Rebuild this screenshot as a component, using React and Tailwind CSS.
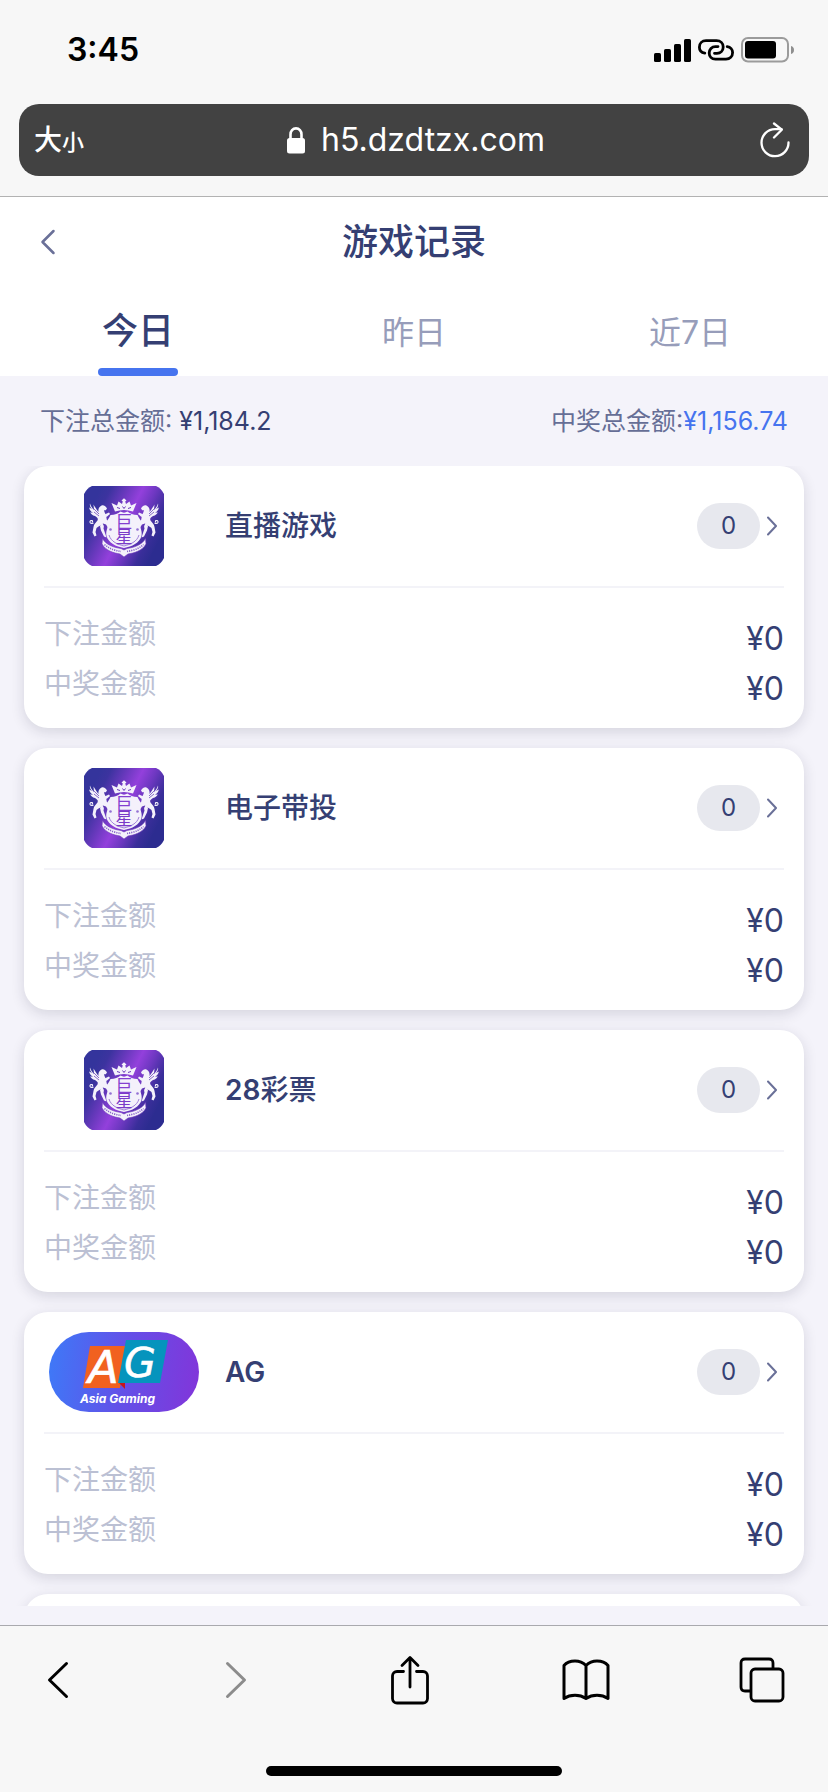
const games = [
  { name: '直播游戏', logo: 'star' },
  { name: '电子带投', logo: 'star' },
  { prefix: '28', name: '彩票', logo: 'star' },
  { prefix: 'AG', name: '', logo: 'ag' },
];

function Signal() {
  return (
    <svg width="37" height="23" viewBox="0 0 37 23" aria-hidden="true">
      <rect x="0" y="14" width="7" height="9" rx="1.6" />
      <rect x="10" y="10" width="7" height="13" rx="1.6" />
      <rect x="20" y="5" width="7" height="18" rx="1.6" />
      <rect x="30" y="0" width="7" height="23" rx="1.6" />
    </svg>
  );
}

function Hotspot() {
  return (
    <svg width="36" height="22" viewBox="0 0 36 22" fill="none" stroke="#000" strokeWidth="2.8" strokeLinecap="round" aria-hidden="true">
      <path d="M6.8 14.1C3.5 13.6 1.4 11.3 1.4 8.2C1.4 4.4 4.2 1.7 8 1.7H18.5C22.6 1.7 25.2 4.6 25.2 8C25.2 11.6 22.5 14.3 19 14.3H16.5" />
      <path d="M29.2 7.6C32.5 8 34.6 10.5 34.6 13.6C34.6 17.4 31.8 20.1 28 20.1H17.5C13.4 20.1 11.2 17.4 11.2 14C11.2 10.4 13.8 7.6 17.4 7.6H20" />
    </svg>
  );
}

function Battery() {
  return (
    <svg width="53" height="26" viewBox="0 0 53 26" aria-hidden="true">
      <rect x="1" y="1" width="46" height="23.5" rx="6" fill="none" stroke="#9b9b9b" strokeWidth="2" />
      <rect x="4" y="4" width="31" height="17.5" rx="3" />
      <path d="M50 9C52 9.6 53 11 53 13C53 15 52 16.4 50 17Z" fill="#8f8f8f" />
    </svg>
  );
}

function Lock() {
  return (
    <svg width="18" height="27" viewBox="0 0 18 27" aria-hidden="true">
      <rect x="0" y="11" width="18" height="15.5" rx="2.5" fill="#fff" />
      <path d="M3.5 12V7.5C3.5 4 5.8 1.4 9 1.4S14.5 4 14.5 7.5V12" fill="none" stroke="#fff" strokeWidth="2.6" />
    </svg>
  );
}

function Reload() {
  return (
    <svg width="30" height="36" viewBox="0 0 30 36" fill="none" stroke="#fff" strokeWidth="2.3" strokeLinecap="round" strokeLinejoin="round" aria-hidden="true">
      <path d="M28.500 20.500A13.500 13.500 0 1 1 15 7.200H21.500" />
      <path d="M14 1.500L21.800 7.700L14 15.500" />
    </svg>
  );
}

function Griffin() {
  return (
    <g fill="#f4f1fb">
      <path d="M6 17.500C7 21 8.500 22 10 24L9.500 18.500C11.500 22 13 24 14.500 26C14 23 15 20.500 18 19.200C20.500 19 22 20.500 23 22.500L21.800 24.300L20 24.200C20.500 27 22.500 28.500 22.500 32C22.500 34 24 35.200 24.500 37.500L26 41.500L24.500 42.500L22 38.500L19 37.500C17.500 39.500 14.500 40 12.500 42L11.500 46L12.500 49.500L10.500 50.500L8.500 46.500L9.500 41C9.800 38 12 36.500 13.500 34.500C14.500 32 13 31.500 11 30C8.500 29.500 6.800 28 6.300 26.300L9 27C7 25.500 5.300 23.700 5.200 21.500L8 23C6.300 21 5.500 19.500 6 17.500Z" />
      <path d="M18 37C19.500 38.500 20.500 40 19.500 42.500L21 47L22.500 51.500L20 50.500L17 44.500L16 40Z" />
      <path d="M9.500 37C6 38.500 5 35.500 7 34.500C9 34 9 36.500 7.500 36" fill="none" stroke="#f4f1fb" strokeWidth="1.1" />
      <path d="M20.500 28.500L25 26.500L26 28L22.500 31Z" />
      <path d="M10 26L15 30M9.500 22.500L15 28" stroke="#5a34b0" strokeWidth=".7" />
    </g>
  );
}

function StarLogo() {
  return (
    <svg className="size-20" viewBox="0 0 80 80" role="img" aria-label="巨星">
      <defs>
        <linearGradient id="starSheen" gradientUnits="userSpaceOnUse" x1="6" y1="23" x2="74" y2="57">
          <stop offset="0" stopColor="#34349c" />
          <stop offset=".12" stopColor="#3c339f" />
          <stop offset=".32" stopColor="#6a39be" />
          <stop offset=".5" stopColor="#9340dc" />
          <stop offset=".66" stopColor="#6f38c2" />
          <stop offset=".86" stopColor="#3a2e9a" />
          <stop offset="1" stopColor="#2c2c90" />
        </linearGradient>
      </defs>
      <path d="M8 0H72Q77 2 80 8V72Q77 78 72 80H8Q3 78 0 72V8Q3 2 8 0Z" fill="url(#starSheen)" />
      <Griffin />
      <g transform="matrix(-1 0 0 1 80 0)"><Griffin /></g>
      <path d="M27.500 17L33 19.500L34.500 15.500L38 18L38.800 15.500L37.500 14.500L40 12.200L42.500 14.500L41.200 15.500L42 18L45.500 15.500L47 19.500L52.500 17L49 25.500C43 23.500 37 23.500 31 25.500Z" fill="#f4f1fb" />
      <path d="M33 21.500L36 22.500M38.500 20.500L40 22.500L41.500 20.500M44 22.500L47 21.500" stroke="#6838ba" strokeWidth="1" fill="none" />
      <path d="M26.500 29C31 29 34 27.500 36.500 25.500C39 27 41 27 43.500 25.500C46 27.500 49 29 53.500 29C54.500 32 57 34 57.500 36L56 38C56 42 58.500 45 57.500 50C55.500 57 48 60.500 40 62C32 60.500 24.500 57 22.500 50C21.500 45 24 42 24 38L22.500 36C23 34 25.500 32 26.500 29Z" fill="#f4f1fb" />
      <path d="M25 49C27 56 34 58.500 40 60C46 58.500 53 56 55 49" fill="none" stroke="#8a63cf" strokeWidth=".8" />
      <circle cx="26.500" cy="43.500" r="1.3" fill="#9270d3" />
      <circle cx="53.500" cy="43.500" r="1.3" fill="#9270d3" />
      <text x="40" y="42" textAnchor="middle" fontSize="17" fill="#8440d0" className="font-['Noto_Sans_CJK_SC',sans-serif]">巨</text>
      <text x="40" y="57" textAnchor="middle" fontSize="17" fill="#7a3ac8" className="font-['Noto_Sans_CJK_SC',sans-serif]">星</text>
      <path d="M18.500 52.500C22 59 30 61.500 37 62.500L40 64L43 62.500C50 61.500 58 59 61.500 52.500L62 58C58 65 50 67 44 68L40 71L36 68C30 67 22 65 18 58Z" fill="#f4f1fb" stroke="#6936b8" strokeWidth=".6" />
      <path d="M20.500 58.500C26 63.500 32 64.500 37 65.500M43 65.500C48 64.500 54 63.500 59.500 58.500" fill="none" stroke="#8966c9" strokeWidth="1.6" strokeDasharray="1.2 1" />
    </svg>
  );
}

function AgLogo() {
  return (
    <svg className="h-20 w-[150px]" viewBox="0 0 150 80" role="img" aria-label="Asia Gaming">
      <defs>
        <linearGradient id="agBg" gradientUnits="userSpaceOnUse" x1="0" y1="32" x2="150" y2="48">
          <stop offset="0" stopColor="#3f78f7" />
          <stop offset=".5" stopColor="#6350e8" />
          <stop offset="1" stopColor="#8136da" />
        </linearGradient>
      </defs>
      <rect width="150" height="80" rx="40" fill="url(#agBg)" />
      <path d="M41 14H77L71 56H34Z" fill="#f1611f" />
      <path d="M70 51H76V57Z" fill="#c5161c" />
      <text x="39" y="51" fontSize="45" fontStyle="italic" fill="#fff" stroke="#fff" strokeWidth=".6" className="font-['DejaVu_Sans',sans-serif]">A</text>
      <path d="M77 8H119L111 51H69Z" fill="#0594bd" />
      <text x="75" y="45" fontSize="41" fontStyle="italic" fill="#fff" stroke="#fff" strokeWidth=".6" className="font-['DejaVu_Sans',sans-serif]">G</text>
      <text x="31" y="71" fontSize="12" fontWeight="700" fontStyle="italic" fill="#fff" className="font-[Inter,sans-serif]">Asia Gaming</text>
    </svg>
  );
}

function GameCard({ game }) {
  return (
    <li className="rounded-3xl bg-white px-5 shadow-[0_4px_14px_rgba(30,30,60,0.14)]">
      <a href="#detail" className="flex h-[122px] items-center border-b-2 border-[#f3f3f8]">
        <span className="ml-[5px] flex w-[150px] justify-center">
          {game.logo === 'ag' ? <AgLogo /> : <StarLogo />}
        </span>
        <span className="ml-[26px] flex-1 text-[28px] leading-10 font-medium">
          <span className="font-semibold">{game.prefix}</span>{game.name}
        </span>
        <span className="flex h-[46px] w-[63px] items-center justify-center rounded-full bg-[#e7e8ee] text-2xl">0</span>
        <svg className="mr-[7px] ml-[7px]" width="10" height="20" viewBox="0 0 10 20" fill="none" stroke="#6a7098" strokeWidth="2" strokeLinecap="round" strokeLinejoin="round" aria-hidden="true">
          <path d="M1 1.500L9 10L1 18.500" />
        </svg>
      </a>
      <dl className="pt-[26px] pb-[14px]">
        {['下注金额', '中奖金额'].map((label) => (
          <div key={label} className="flex h-[50px] justify-between">
            <dt className="text-[28px] leading-10 text-[#bbc0d3]">{label}</dt>
            <dd className="text-[32px] leading-[50px]">¥0</dd>
          </div>
        ))}
      </dl>
    </li>
  );
}

export default function App() {
  return (
    <div className="flex h-screen flex-col bg-[#f4f3fa] font-[Inter,'Noto_Sans_CJK_SC',sans-serif] text-[#353f73]">
      <div className="border-b border-[#b2b2b2] bg-[#f7f7f7] pb-5 text-black">
        <div className="flex h-[104px] items-center justify-between pr-[34px] pb-1 pl-[67px]">
          <time className="text-[32px] leading-10 font-semibold">3:45</time>
          <div className="flex items-center gap-[7px]">
            <Signal />
            <Hotspot />
            <Battery />
          </div>
        </div>
        <div className="mx-[19px] grid h-[72px] grid-cols-[1fr_auto_1fr] items-center rounded-[20px] bg-[#424242] px-[15px] text-white">
          <button type="button" className="justify-self-start pt-1 leading-10 font-medium">
            <span className="text-[28px]">大</span>
            <span className="text-[22px]">小</span>
          </button>
          <div className="flex items-center gap-4 pl-1">
            <Lock />
            <span className="text-[32px] leading-10">h5.dzdtzx.com</span>
          </div>
          <button type="button" aria-label="刷新" className="mr-1 justify-self-end"><Reload /></button>
        </div>
      </div>

      <header className="bg-white">
        <div className="grid h-[90px] grid-cols-[1fr_auto_1fr] items-center px-10">
          <button type="button" aria-label="返回" className="justify-self-start">
            <svg width="16" height="26" viewBox="0 0 16 26" fill="none" stroke="#6a7098" strokeWidth="2.5" strokeLinecap="round" strokeLinejoin="round" aria-hidden="true">
              <path d="M13.500 2L2.500 13L13.500 24" />
            </svg>
          </button>
          <h1 className="text-4xl font-medium">游戏记录</h1>
        </div>
        <nav className="grid h-[89px] grid-cols-3 text-[32px] text-[#979dba]">
          <button type="button" className="flex flex-col items-center justify-between pt-4 text-4xl font-medium text-[#353f73]">
            <span className="leading-[56px]">今日</span>
            <span className="h-2 w-20 rounded-full bg-[#4674ef]" />
          </button>
          <button type="button" className="flex justify-center pt-[18px] leading-[56px]">昨日</button>
          <button type="button" className="flex justify-center pt-[18px] leading-[56px]">近7日</button>
        </nav>
      </header>

      <div className="flex h-[90px] shrink-0 items-center justify-between px-10 pt-0.5 text-[25px]">
        <p><span className="text-[#666e96]">下注总金额: </span>¥1,184.2</p>
        <p><span className="text-[#666e96]">中奖总金额:</span><span className="text-[#4674ef]">¥1,156.74</span></p>
      </div>

      <ul className="mb-[19px] flex min-h-0 flex-1 flex-col gap-5 overflow-y-auto px-6 [scrollbar-width:none]">
        {games.map((game) => <GameCard key={`${game.prefix}${game.name}`} game={game} />)}
        <li aria-hidden="true" className="h-[262px] shrink-0 rounded-3xl bg-white shadow-[0_4px_14px_rgba(30,30,60,0.14)]" />
      </ul>

      <footer className="border-t border-[#a9a9ae] bg-[#f7f7f7] pb-4">
        <div className="flex h-[140px] items-start justify-between pt-[26px] pr-[42px] pl-[34px]">
          <button type="button" aria-label="后退" className="flex h-14 w-12 items-center justify-center">
            <svg width="22" height="38" viewBox="0 0 22 38" fill="none" stroke="#000" strokeWidth="3" strokeLinecap="round" strokeLinejoin="round"><path d="M19.500 2.500L2.500 19L19.500 35.500" /></svg>
          </button>
          <button type="button" aria-label="前进" className="flex h-14 w-12 items-center justify-center pl-1">
            <svg width="22" height="38" viewBox="0 0 22 38" fill="none" stroke="#8c8c8c" strokeWidth="3" strokeLinecap="round" strokeLinejoin="round"><path d="M2.500 2.500L19.500 19L2.500 35.500" /></svg>
          </button>
          <button type="button" aria-label="分享" className="flex h-14 w-12 items-center justify-center">
            <svg width="38" height="50" viewBox="0 0 38 50" fill="none" stroke="#000" strokeWidth="2.8" strokeLinecap="round" strokeLinejoin="round"><path d="M12.500 16.500H6C3.500 16.500 1.500 18.500 1.500 21V43.500C1.500 46 3.500 48 6 48H32C34.500 48 36.500 46 36.500 43.500V21C36.500 18.500 34.500 16.500 32 16.500H25.500M19 32V3M11 10.500L19 2.500L27 10.500" /></svg>
          </button>
          <button type="button" aria-label="书签" className="flex h-14 w-12 items-center justify-center">
            <svg width="48" height="42" viewBox="0 0 48 42" fill="none" stroke="#000" strokeWidth="3" strokeLinejoin="round"><path d="M24 6.500C21 3.500 17.500 2 13 2C8.500 2 4.500 3.500 2 6.500V39.500C5 37.500 8.500 36.300 13 36.300C17.500 36.300 21 37.500 24 39.500C27 37.500 30.500 36.300 35 36.300C39.500 36.300 43 37.500 46 39.500V6.500C43.500 3.500 39.500 2 35 2C30.500 2 27 3.500 24 6.500ZM24 6.500V39.500" /></svg>
          </button>
          <button type="button" aria-label="标签页" className="flex h-14 w-12 items-center justify-center">
            <svg width="46" height="46" viewBox="0 0 46 46" fill="none" stroke="#000" strokeWidth="2.8"><rect x="12" y="12" width="32" height="32" rx="4" /><path d="M34 12V6C34 3.500 32.500 2 30 2H6C3.500 2 2 3.500 2 6V30C2 32.500 3.500 34 6 34H12" /></svg>
          </button>
        </div>
        <div className="mx-auto h-2.5 w-[296px] rounded-full bg-black" />
      </footer>
    </div>
  );
}
